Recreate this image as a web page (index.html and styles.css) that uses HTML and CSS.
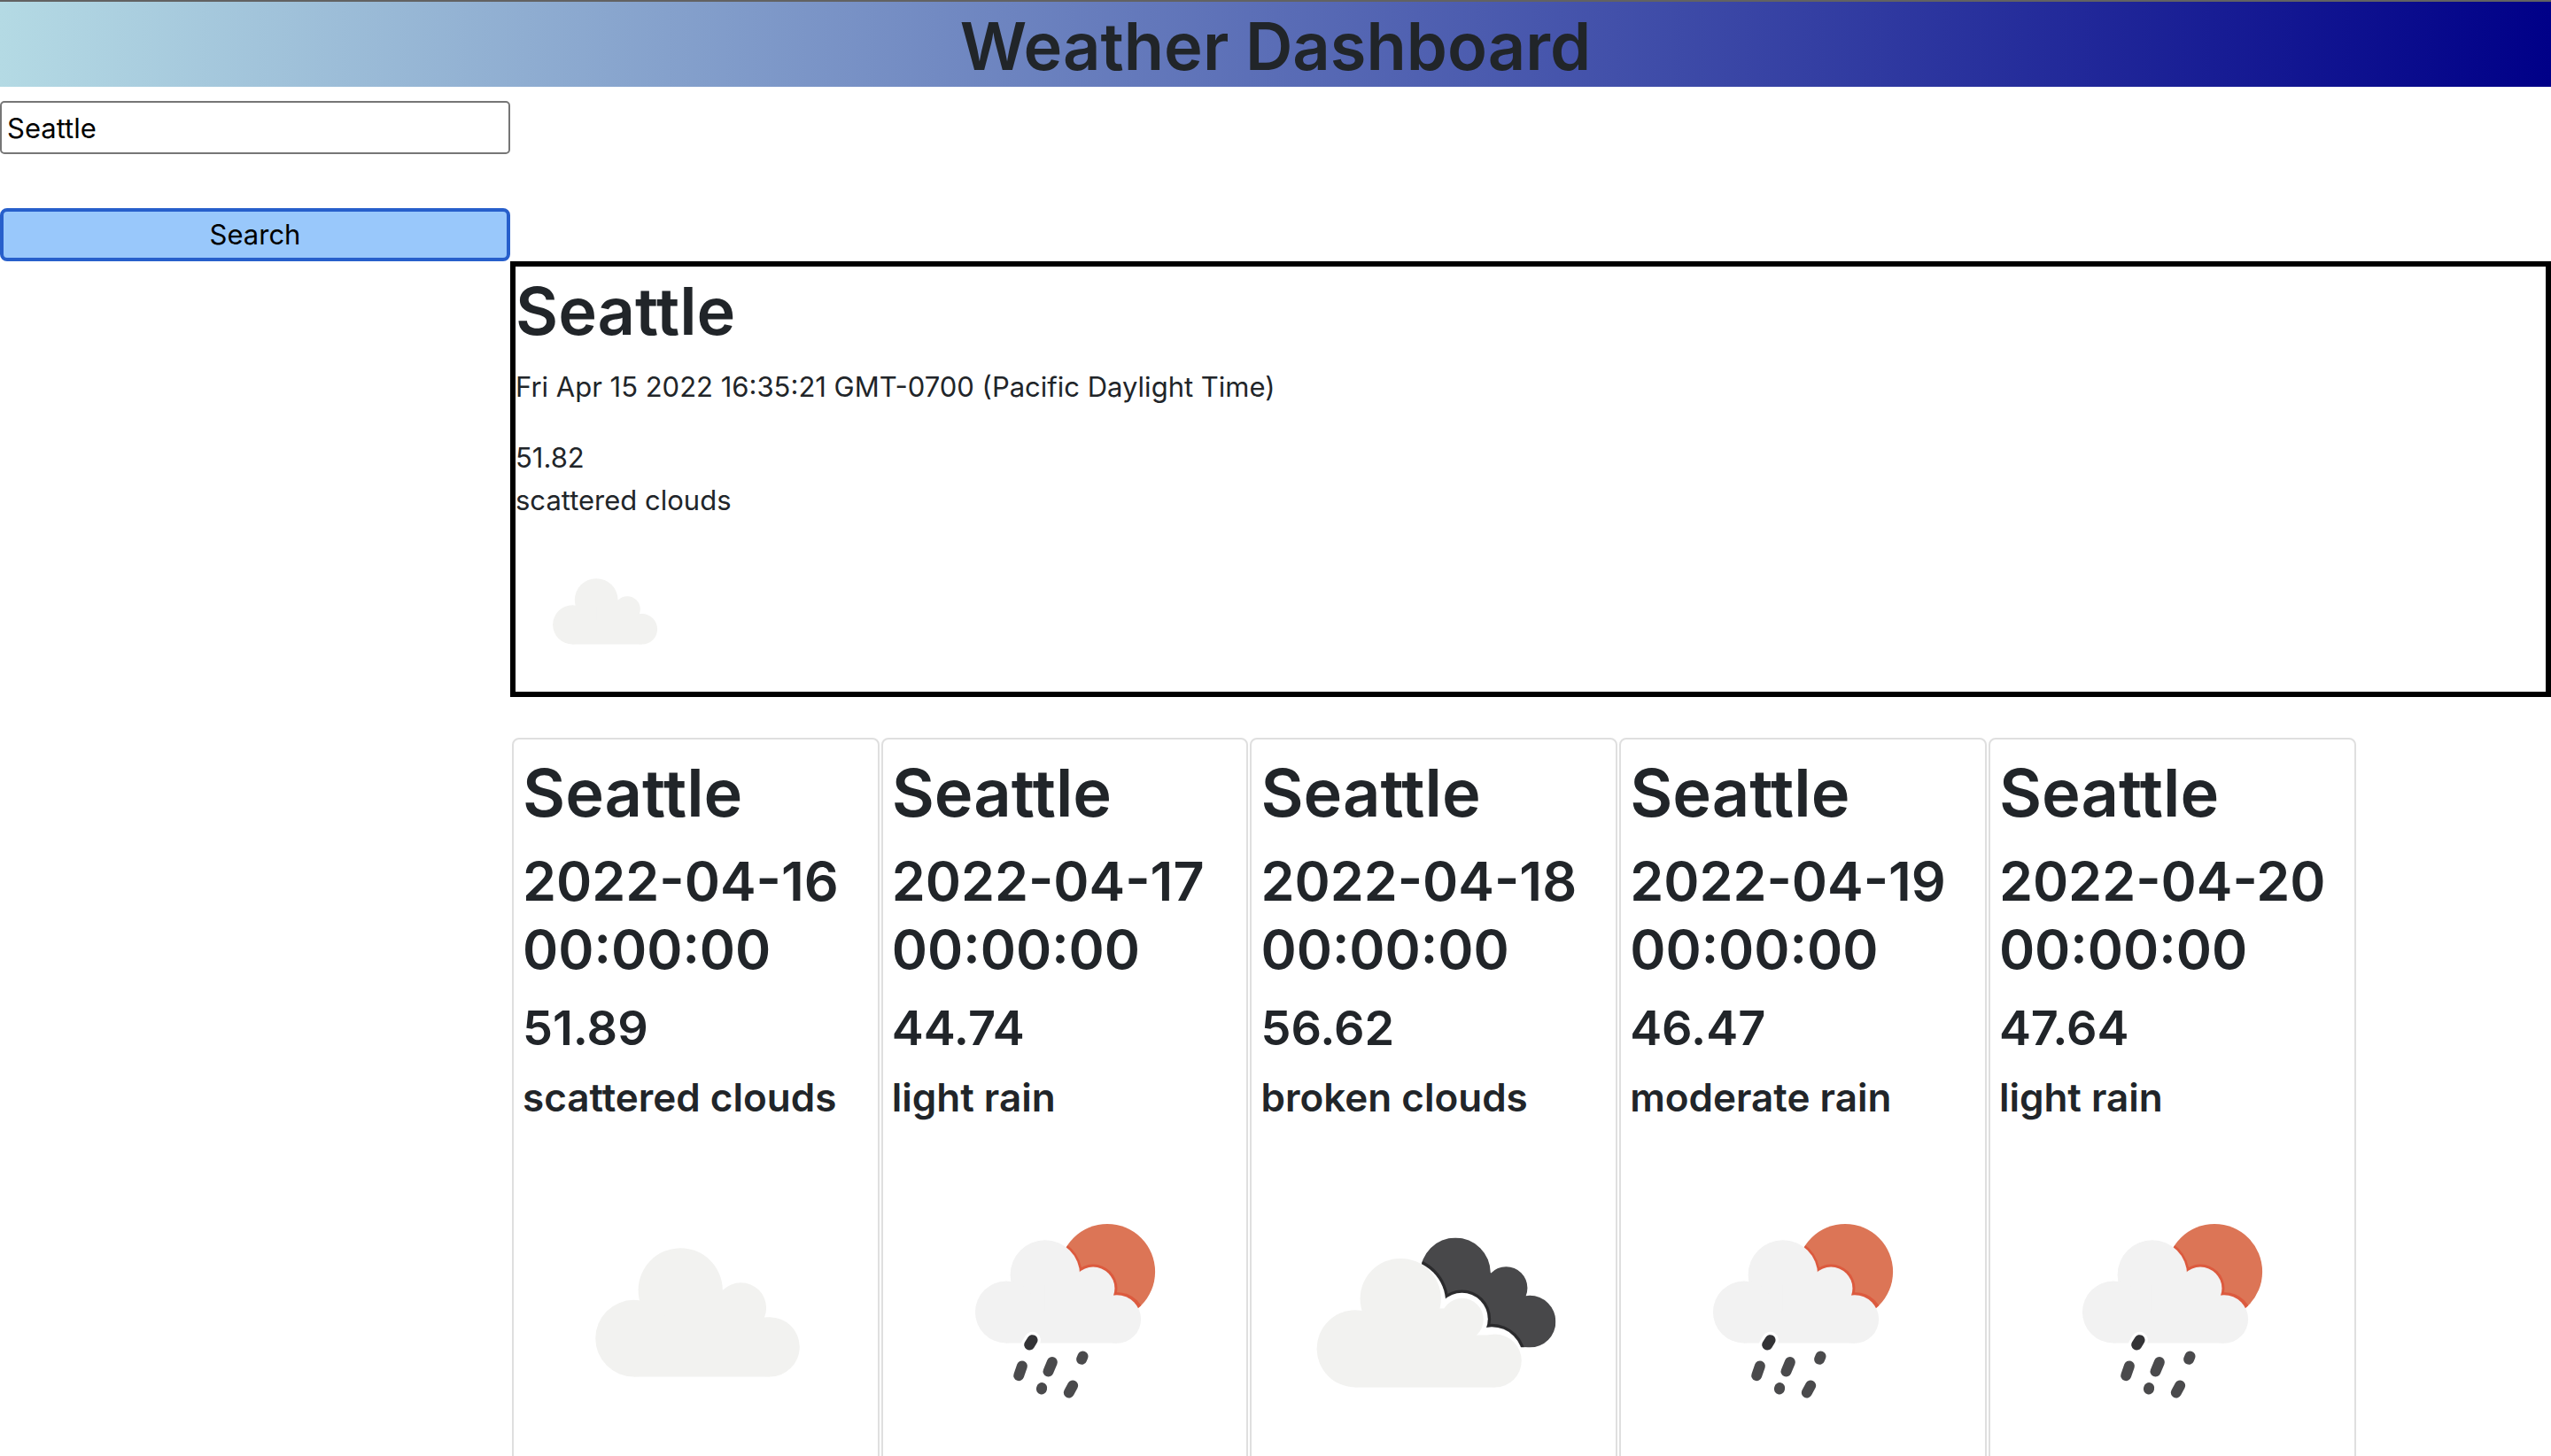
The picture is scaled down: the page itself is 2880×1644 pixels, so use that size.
FILE: index.html
```html
<!DOCTYPE html>
<html lang="en">
<head>
<meta charset="utf-8">
<meta name="viewport" content="width=device-width, initial-scale=1">
<title>Weather Dashboard</title>
<link rel="stylesheet" href="styles.css">
</head>
<body>
<svg class="sprite" aria-hidden="true">
  <defs>
    <symbol id="cloud" viewBox="0 0 391 391">
      <g transform="translate(30 57) scale(.3333)" fill="#f2f2f0">
        <circle cx="445" cy="348" r="143"/>
        <circle cx="287" cy="511" r="130"/>
        <circle cx="650" cy="408" r="86"/>
        <circle cx="748" cy="540" r="101"/>
        <path d="M287 440H748V641H287Z"/>
        <path d="M445 390H650V480H445Z"/>
      </g>
    </symbol>
    <clipPath id="sun-clip"><circle cx="631" cy="285" r="162"/></clipPath>
    <symbol id="rain" viewBox="0 0 391 391">
      <g transform="translate(33 57) scale(.3333)">
        <circle cx="631" cy="285" r="162" fill="#dc7556"/>
        <g fill="#dc5a3e" clip-path="url(#sun-clip)">
          <circle cx="420" cy="296" r="126"/>
          <circle cx="583" cy="342" r="82"/>
          <circle cx="666" cy="448" r="93"/>
        </g>
        <g fill="#f2f2f2">
          <circle cx="420" cy="296" r="118"/>
          <circle cx="288" cy="422" r="105"/>
          <circle cx="583" cy="342" r="73"/>
          <circle cx="663" cy="446" r="82"/>
          <path d="M288 390H663V527H288Z"/>
          <path d="M420 330H583V420H420Z"/>
        </g>
        <g fill="none" stroke="#fff" stroke-linecap="round" stroke-width="56">
          <path d="M367 533L377 517"/>
          <path d="M544 583L548 571"/>
        </g>
        <g fill="none" stroke="#4a4a4c" stroke-linecap="round" stroke-width="36">
          <path stroke="#333336" d="M367 533L377 517"/>
          <path d="M331 637L342 605"/>
          <path d="M431 623L444 592"/>
          <path d="M544 582L548 572"/>
          <path d="M408 683L409 679"/>
          <path d="M501 695L514 671"/>
        </g>
      </g>
    </symbol>
    <clipPath id="dark-clip">
      <circle cx="610" cy="289" r="119"/>
      <circle cx="782" cy="340" r="72"/>
      <circle cx="862" cy="454" r="88"/>
      <path d="M560 300L728 288L850 370L862 541L828 541L700 500L560 400Z"/>
    </clipPath>
    <symbol id="broken" viewBox="0 0 391 391">
      <g transform="translate(17 57) scale(.3333)">
        <g clip-path="url(#dark-clip)">
          <path fill="#48484a" d="M450 150H1000V600H450Z"/>
          <g fill="#2b2b2d">
            <circle cx="431" cy="390" r="156"/>
            <circle cx="632" cy="445" r="98"/>
            <circle cx="733" cy="577" r="115"/>
          </g>
        </g>
        <g fill="#fff">
          <circle cx="431" cy="390" r="146"/>
          <circle cx="632" cy="445" r="88"/>
          <circle cx="733" cy="577" r="105"/>
        </g>
        <g fill="#f2f2f0">
          <circle cx="424" cy="377" r="137"/>
          <circle cx="271" cy="546" r="131"/>
          <circle cx="633" cy="447" r="72"/>
          <circle cx="744" cy="587" r="90"/>
          <path d="M271 500H744V677H271Z"/>
          <path d="M424 410H633V520H424Z"/>
        </g>
      </g>
    </symbol>
  </defs>
</svg>

<header class="banner">
  <h1 class="title">Weather Dashboard</h1>
</header>

<form class="search" onsubmit="return false">
  <input class="search-input" type="text" name="city" value="Seattle" aria-label="City">
  <button class="search-button" type="submit">Search</button>
</form>

<main class="results">
  <section class="current">
    <h2 class="title">Seattle</h2>
    <p class="current-date">Fri Apr 15 2022 16:35:21 GMT-0700 (Pacific Daylight Time)</p>
    <div>51.82</div>
    <div>scattered clouds</div>
    <svg class="current-icon" viewBox="0 0 391 375" role="img" aria-label="scattered clouds"><use href="#cloud" width="391" height="391"/></svg>
  </section>

  <section class="forecast">
    <article class="card">
      <h2 class="title">Seattle</h2>
      <h3 class="date">2022-04-16 00:00:00</h3>
      <h4 class="temp">51.89</h4>
      <h5 class="desc">scattered clouds</h5>
      <svg class="icon" viewBox="0 0 391 391" aria-hidden="true"><use href="#cloud"/></svg>
    </article>
    <article class="card">
      <h2 class="title">Seattle</h2>
      <h3 class="date">2022-04-17 00:00:00</h3>
      <h4 class="temp">44.74</h4>
      <h5 class="desc">light rain</h5>
      <svg class="icon" viewBox="0 0 391 391" aria-hidden="true"><use href="#rain"/></svg>
    </article>
    <article class="card">
      <h2 class="title">Seattle</h2>
      <h3 class="date">2022-04-18 00:00:00</h3>
      <h4 class="temp">56.62</h4>
      <h5 class="desc">broken clouds</h5>
      <svg class="icon" viewBox="0 0 391 391" aria-hidden="true"><use href="#broken"/></svg>
    </article>
    <article class="card">
      <h2 class="title">Seattle</h2>
      <h3 class="date">2022-04-19 00:00:00</h3>
      <h4 class="temp">46.47</h4>
      <h5 class="desc">moderate rain</h5>
      <svg class="icon" viewBox="0 0 391 391" aria-hidden="true"><use href="#rain"/></svg>
    </article>
    <article class="card">
      <h2 class="title">Seattle</h2>
      <h3 class="date">2022-04-20 00:00:00</h3>
      <h4 class="temp">47.64</h4>
      <h5 class="desc">light rain</h5>
      <svg class="icon" viewBox="0 0 391 391" aria-hidden="true"><use href="#rain"/></svg>
    </article>
  </section>
</main>
</body>
</html>
```
FILE: styles.css
```css
*,
*::before,
*::after {
  box-sizing: border-box;
}

body {
  margin: 0;
  border-top: 2px solid #626262;
  background: #fff;
  color: #212529;
  font-family: Inter, "Liberation Sans", sans-serif;
  font-size: 31px;
  line-height: 48px;
}

.sprite {
  position: absolute;
  width: 0;
  height: 0;
}

.title,
.date,
.temp,
.desc {
  margin: 0 0 16px;
  font-weight: 600;
}

.title {
  padding-top: 4px;
  font-size: 74px;
  line-height: 92px;
}

.banner {
  margin-bottom: 16px;
  background: linear-gradient(to right, #b4dae4, #000088);
  text-align: center;
}

.banner .title {
  margin: 0;
}

.search {
  display: flex;
  flex-direction: column;
  gap: 61px;
  width: 20%;
}

.search-input,
.search-button {
  width: 100%;
  height: 60px;
  margin: 0;
  color: #000;
  font: inherit;
}

.search-input {
  padding: 2px 6px;
  border: 2px solid #767676;
  border-radius: 5px;
  background: #fff;
}

.search-button {
  padding: 0;
  border: 4px solid #275fcb;
  border-radius: 8px;
  background: #99c8fb;
}

.results {
  margin-left: 20%;
}

.current {
  border: 6px solid #000;
}

.current-date {
  margin: 0 0 32px;
}

.current-icon {
  display: block;
  width: 200px;
  height: 192px;
}

.forecast {
  display: flex;
  margin-top: 46px;
}

.card {
  width: 18%;
  margin-left: 2px;
  padding: 10px;
  border: 2px solid #dfdfdf;
  border-radius: 8px;
}

.date {
  font-size: 61px;
  line-height: 77px;
}

.temp {
  font-size: 54px;
  line-height: 67px;
}

.desc {
  font-size: 44px;
  line-height: 58px;
}

.icon {
  display: block;
  width: 100%;
  height: auto;
}
```
